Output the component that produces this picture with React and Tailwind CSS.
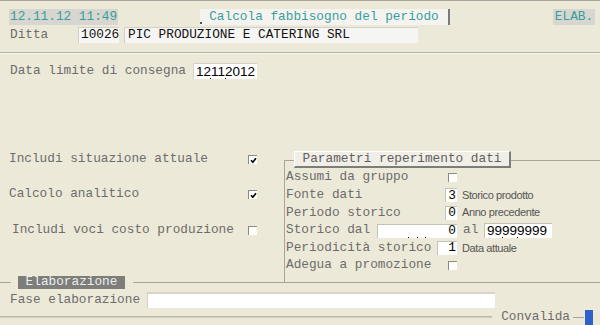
import React from "react";

function Check({ checked }) {
  return (
    <span className="inline-flex w-[9px] h-[9px] bg-white border-t border-l border-[#8a8a84] items-center justify-center">
      {checked && (
        <svg width="7" height="7" viewBox="0 0 7 7">
          <path d="M1 3.2 L2.8 5.2 L6 1.2" stroke="#000" strokeWidth="1.6" fill="none" />
        </svg>
      )}
    </span>
  );
}

function Box({ w, children }) {
  return (
    <div
      className={`${w} h-[14px] bg-white border-t border-l border-[#c4c2b8] text-black flex items-center justify-end pr-[1px]`}
    >
      {children}
    </div>
  );
}

const Note = ({ children }) => (
  <span className="ml-[5px] font-['Liberation_Sans',Arial,sans-serif] text-[11px] tracking-[-0.4px] text-[#555]">
    {children}
  </span>
);

export default function App() {
  return (
    <div className="w-[600px] h-[325px] bg-[#ECE9D8] border-t border-[#a8a69c] overflow-hidden font-['Liberation_Mono',monospace] text-[12.75px] leading-none text-[#6c6c6c] flex flex-col">
      {/* top row */}
      <div className="flex items-center mt-[8px] h-[16px]">
        <div className="ml-[9px] w-[109px] h-[16px] bg-[#d7d6d0] text-[#3a9e9e] flex items-center pl-[1px]">
          12.11.12 11:49
        </div>
        <div className="relative ml-[82px] w-[250px] h-[16px] bg-[#f4f3ef] border-r-2 border-[#7a7a76] text-[#3a9e9e] flex items-center justify-center">
          Calcola fabbisogno del periodo
          <span className="absolute left-0 bottom-[1px] w-[2px] h-[2px] bg-[#555]" />
        </div>
        <div className="ml-auto mr-[5px] w-[42px] h-[16px] bg-[#d7d6d0] text-[#3a9e9e] flex items-center justify-center">
          ELAB.
        </div>
      </div>

      {/* ditta */}
      <div className="flex items-center mt-[2px] h-[16px]">
        <span className="ml-[10px] w-[68px]">Ditta</span>
        <div className="w-[41px] h-[16px] bg-[#f7f7f5] border-t border-l border-[#d2d0c8] text-[#111] flex items-center pl-[2px]">
          10026
        </div>
        <div className="ml-[5px] w-[294px] h-[16px] bg-[#f5f5f3] border-t border-l border-[#d2d0c8] text-[#111] flex items-center pl-[3px]">
          PIC PRODUZIONE E CATERING SRL
        </div>
      </div>

      <div className="mt-[9px] border-t border-[#b3b0a2] border-b border-b-[#f6f5ee]" />

      {/* data limite */}
      <div className="flex items-center mt-[9px] h-[16px]">
        <span className="ml-[10px] w-[183px]">Data limite di consegna</span>
        <div className="relative w-[64px] h-[16px] bg-white border-t border-l border-[#d2d0c8] text-black flex items-center pl-[2px] font-['Liberation_Sans',Arial,sans-serif] text-[13.5px]">
          12112012
          <span className="absolute left-[16px] bottom-[0px] w-[1px] h-[1px] bg-black" />
          <span className="absolute left-[31px] bottom-[0px] w-[1px] h-[1px] bg-black" />
        </div>
      </div>

      {/* middle section */}
      <div className="flex h-[132px] mt-[72px]">
        <div className="w-[284px] flex flex-col">
          <div className="flex items-center h-[17px]">
            <span className="ml-[9px] w-[239px]">Includi situazione attuale</span>
            <Check checked />
          </div>
          <div className="flex items-center h-[17.6px] mt-[18px]">
            <span className="ml-[9px] w-[239px]">Calcolo analitico</span>
            <Check checked />
          </div>
          <div className="flex items-center h-[17.6px] mt-[18.4px]">
            <span className="ml-[12px] w-[236px]">Includi voci costo produzione</span>
            <Check />
          </div>
        </div>

        <div className="flex-1 flex flex-col">
          <div className="flex h-[17px]">
            <div className="w-[10px] flex flex-col">
              <div className="h-[9px]" />
              <div className="flex-1 border-t border-l border-[#a8a69a]" />
            </div>
            <div className="w-[217px] h-[17px] bg-[#f0eee6] border-t border-l border-white border-r-2 border-b-2 border-r-[#7c7c78] border-b-[#7c7c78] flex items-center justify-center text-[#5f5f5f]">
              Parametri reperimento dati
            </div>
            <div className="flex-1 flex flex-col">
              <div className="h-[9px]" />
              <div className="border-t border-[#a8a69a]" />
            </div>
          </div>
          <div className="flex-1 border-l border-[#a8a69a] pl-[1px] pt-[1px] flex flex-col">
            <div className="flex items-center h-[17.6px]">
              <span className="w-[162px]">Assumi da gruppo</span>
              <Check />
            </div>
            <div className="flex items-center h-[17.6px]">
              <span className="w-[159px]">Fonte dati</span>
              <Box w="w-[12px]">3</Box>
              <Note>Storico prodotto</Note>
            </div>
            <div className="flex items-center h-[17.6px]">
              <span className="w-[159px]">Periodo storico</span>
              <Box w="w-[12px]">0</Box>
              <Note>Anno precedente</Note>
            </div>
            <div className="flex items-center h-[17.6px]">
              <span className="w-[91px]">Storico dal</span>
              <div className="relative">
                <Box w="w-[80px]">0</Box>
                <span className="absolute left-[31px] bottom-[0px] w-[1px] h-[1px] bg-black" />
                <span className="absolute left-[40px] bottom-[0px] w-[1px] h-[1px] bg-black" />
                <span className="absolute left-[48px] bottom-[0px] w-[1px] h-[1px] bg-black" />
              </div>
              <span className="ml-[6px] w-[21px]">al</span>
              <div className="relative w-[68px] h-[15px] bg-white border-t border-l border-[#c4c2b8] text-black flex items-center pl-[2px] font-['Liberation_Sans',Arial,sans-serif] text-[13.5px]">
                99999999
                <span className="absolute left-[17px] bottom-[0px] w-[1px] h-[1px] bg-black" />
                <span className="absolute left-[32px] bottom-[0px] w-[1px] h-[1px] bg-black" />
              </div>
            </div>
            <div className="flex items-center h-[17.6px]">
              <span className="w-[151px]">Periodicità storico</span>
              <Box w="w-[20px]">1</Box>
              <Note>Data attuale</Note>
            </div>
            <div className="flex items-center h-[17.6px]">
              <span className="w-[162px]">Adegua a promozione</span>
              <Check />
            </div>
          </div>
        </div>
      </div>

      {/* Elaborazione legend */}
      <div className="flex items-center h-[13px] -mt-[7px]">
        <div className="w-[11px] border-t border-[#a8a69a]" />
        <div className="ml-[7px] w-[107px] h-[13px] bg-[#7d7d7a] text-[#eeeeee] flex items-center justify-center">
          Elaborazione
        </div>
        <div className="ml-[8px] flex-1 border-t border-[#a8a69a]" />
      </div>

      {/* Fase elaborazione */}
      <div className="flex items-center mt-[3px] h-[16px]">
        <span className="ml-[10px] w-[137px]">Fase elaborazione</span>
        <div className="w-[348px] h-[16px] bg-white border-t-2 border-l border-[#d6d3c9]" />
      </div>

      {/* bottom bar */}
      <div className="flex items-center mt-[1px] h-[16px]">
        <div className="flex-1 border-t border-b border-[#bdbaac] border-b-[#d2cfc2]" />
        <span className="ml-[9px]">Convalida</span>
        <div className="ml-[3px] w-[11px] border-t border-[#a8a69a]" />
        <div className="ml-[1px] mr-[7px] w-[8px] h-[15px] self-end bg-[#2d62c8]" />
      </div>
    </div>
  );
}
